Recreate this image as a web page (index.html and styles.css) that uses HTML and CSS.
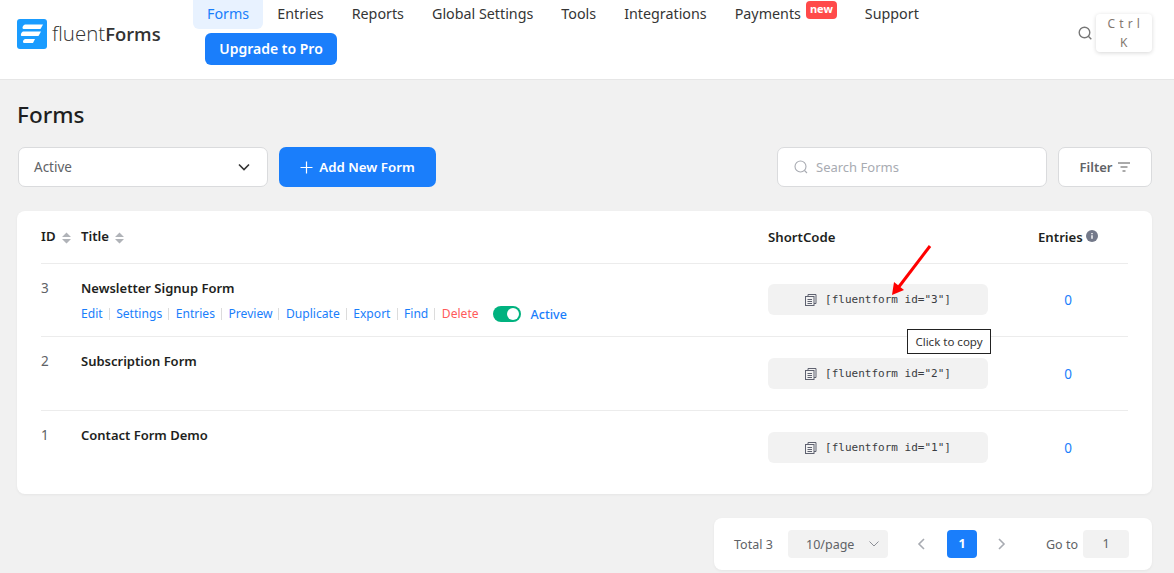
FILE: index.html
```html
<!DOCTYPE html>
<html lang="en">
<head>
  <meta charset="UTF-8">
  <meta name="viewport" content="width=device-width, initial-scale=1">
  <title>Fluent Forms</title>
  <link rel="stylesheet" href="styles.css">
</head>
<body>
  <!-- Top Bar -->
  <header class="top-bar">
    <div class="logo">
      <svg class="logo-mark" width="30" height="30" viewBox="0 0 30 30">
        <rect width="30" height="30" rx="3" fill="#1a9cff"/>
        <path d="M8 5.500h18l-2.500 4.500H6.500C5 10 5 7 8 5.500z" fill="#fff"/>
        <path d="M6 12.500h18l-2.500 4.500H4.500C3.500 17 3.500 14 6 12.500z" fill="#fff"/>
        <path d="M8 20h10l-2 4H7C5.500 24 5.500 21 8 20z" fill="#fff"/>
      </svg>
      <span class="logo-text">fluent<b>Forms</b></span>
    </div>
    <nav class="menu">
      <a class="menu-item current" href="#">Forms</a>
      <a class="menu-item" href="#">Entries</a>
      <a class="menu-item" href="#">Reports</a>
      <a class="menu-item" href="#">Global Settings</a>
      <a class="menu-item" href="#">Tools</a>
      <a class="menu-item" href="#">Integrations</a>
      <a class="menu-item" href="#">Payments<span class="new-badge">new</span></a>
      <a class="menu-item" href="#">Support</a>
      <a class="upgrade" href="#">Upgrade to Pro</a>
    </nav>
    <div class="global-search">
      <svg width="14" height="14" viewBox="0 0 14 14" fill="none" stroke="#777" stroke-width="1.400">
        <circle cx="6.500" cy="6.500" r="5.300"/>
        <path d="M10.300 10.300l3 3"/>
      </svg>
      <div class="shortcut">C t r l K</div>
    </div>
  </header>

  <!-- Main Content -->
  <main class="main">
    <h1 class="page-title">Forms</h1>

    <div class="toolbar">
      <div class="select">
        <span>Active</span>
        <svg width="14" height="14" viewBox="0 0 14 14" fill="none" stroke="#333" stroke-width="1.600">
          <path d="M2 4.500l5 5 5-5"/>
        </svg>
      </div>
      <a class="add-btn" href="#">
        <svg width="13" height="13" viewBox="0 0 13 13" stroke="#fff" stroke-width="1.200">
          <path d="M6.500 0.500v12M0.500 6.500h12"/>
        </svg>
        Add New Form
      </a>
      <div class="search">
        <svg width="14" height="14" viewBox="0 0 14 14" fill="none" stroke="#a8abb2" stroke-width="1.100">
          <circle cx="6.500" cy="6.500" r="5.500"/>
          <path d="M10.500 10.500l2.500 2.500"/>
        </svg>
        <span>Search Forms</span>
      </div>
      <a class="filter-btn" href="#">
        Filter
        <svg width="12" height="10" viewBox="0 0 12 10" stroke="#555" stroke-width="1">
          <path d="M0 1h12M2.500 5h7M4.500 9h3"/>
        </svg>
      </a>
    </div>

    <!-- Forms Table -->
    <section class="card">
      <div class="row head">
        <div class="sortable">ID
          <svg class="sort" width="9" height="12" viewBox="0 0 9 12" fill="#b0b3b8"><path d="M4.500 0.500L9 5H0zM4.500 11.500L0 7h9z"/></svg>
        </div>
        <div class="sortable">Title
          <svg class="sort" width="9" height="12" viewBox="0 0 9 12" fill="#b0b3b8"><path d="M4.500 0.500L9 5H0zM4.500 11.500L0 7h9z"/></svg>
        </div>
        <div class="head-label">ShortCode</div>
        <div class="head-label entries-head">Entries
          <svg width="12" height="12" viewBox="0 0 12 12"><circle cx="6" cy="6" r="6" fill="#73798a"/><path d="M6 5.200v3.600M6 3v1.200" stroke="#fff" stroke-width="1.400"/></svg>
        </div>
      </div>

      <div class="row first">
        <div class="cell-id">3</div>
        <div>
          <div class="form-name">Newsletter Signup Form</div>
          <div class="actions">
            <a href="#">Edit</a>
            <a href="#">Settings</a>
            <a href="#">Entries</a>
            <a href="#">Preview</a>
            <a href="#">Duplicate</a>
            <a href="#">Export</a>
            <a href="#">Find</a>
            <a class="delete" href="#">Delete</a>
            <span class="switch"></span>
            <span class="status">Active</span>
          </div>
        </div>
        <div class="code">
          <svg class="copy" width="12" height="12" viewBox="0 0 12 12" fill="none" stroke="#5f6270" stroke-width="1"><path d="M3 2.500V0.500h8v9H9"/><rect x="0.500" y="2.500" width="8.500" height="9"/><path d="M2.500 5.500h4.500M2.500 7.500h4.500M2.500 9.500h4.500"/></svg>
          [fluentform id="3"]
        </div>
        <a class="count" href="#">0</a>
      </div>

      <div class="row">
        <div class="cell-id">2</div>
        <div class="form-name">Subscription Form</div>
        <div class="code">
          <svg class="copy" width="12" height="12" viewBox="0 0 12 12" fill="none" stroke="#5f6270" stroke-width="1"><path d="M3 2.500V0.500h8v9H9"/><rect x="0.500" y="2.500" width="8.500" height="9"/><path d="M2.500 5.500h4.500M2.500 7.500h4.500M2.500 9.500h4.500"/></svg>
          [fluentform id="2"]
        </div>
        <a class="count" href="#">0</a>
      </div>

      <div class="row last">
        <div class="cell-id">1</div>
        <div class="form-name">Contact Form Demo</div>
        <div class="code">
          <svg class="copy" width="12" height="12" viewBox="0 0 12 12" fill="none" stroke="#5f6270" stroke-width="1"><path d="M3 2.500V0.500h8v9H9"/><rect x="0.500" y="2.500" width="8.500" height="9"/><path d="M2.500 5.500h4.500M2.500 7.500h4.500M2.500 9.500h4.500"/></svg>
          [fluentform id="1"]
        </div>
        <a class="count" href="#">0</a>
      </div>
    </section>

    <!-- Pagination -->
    <div class="pager-wrap">
      <div class="pager">
        <span class="total">Total 3</span>
        <div class="page-size">10/page
          <svg width="10" height="6" viewBox="0 0 10 6" fill="none" stroke="#8c8f96" stroke-width="1"><path d="M0.500 0.500L5 5l4.500-4.500"/></svg>
        </div>
        <svg class="arrow" width="8" height="12" viewBox="0 0 8 12" fill="none" stroke="#a8abb2" stroke-width="1.600"><path d="M7 1L2 6l5 5"/></svg>
        <span class="page-num">1</span>
        <svg class="arrow" width="8" height="12" viewBox="0 0 8 12" fill="none" stroke="#a8abb2" stroke-width="1.600"><path d="M1 1l5 5-5 5"/></svg>
        <span class="goto">Go to</span>
        <span class="goto-input">1</span>
      </div>
    </div>
  </main>

  <!-- Annotation over the table -->
  <div class="tooltip">Click to copy</div>
  <svg class="annotation" width="44" height="56" viewBox="0 0 44 56">
    <path d="M41 2L9 44" stroke="#f00" stroke-width="3"/>
    <path d="M3 51L5 38L15 46z" fill="#f00"/>
  </svg>
</body>
</html>
```

FILE: styles.css
```css
/* General Reset */
* {
  margin: 0;
  padding: 0;
  box-sizing: border-box;
}

body {
  font-family: "Noto Sans", "Open Sans", sans-serif;
  background-color: #f1f1f1;
  color: #1e1f21;
  font-size: 13.500px;
  height: 573px;
  overflow: hidden;
}

a {
  text-decoration: none;
  color: inherit;
}

/* Top Bar */
.top-bar {
  display: flex;
  align-items: flex-start;
  height: 80px;
  background-color: #fff;
  border-bottom: 1px solid #e6e6e6;
  padding: 0 22px 0 17px;
}

.logo {
  display: flex;
  align-items: center;
  gap: 5px;
  width: 176px;
  margin-top: 18px;
}

.logo-text {
  font-family: "Open Sans", sans-serif;
  font-size: 20.500px;
  font-weight: 300;
  color: #333;
  line-height: 30px;
}

.logo-text b {
  font-size: 18.400px;
  font-weight: 600;
}

.menu {
  display: flex;
  flex-wrap: wrap;
  width: 860px;
  row-gap: 4px;
}

.menu-item {
  display: flex;
  height: 29px;
  padding: 0 14px;
  line-height: 28px;
  font-size: 14.300px;
  color: #353535;
  border-radius: 0 0 6px 6px;
}

.menu-item.current {
  background-color: #e8f2ff;
  color: #1a7efb;
}

.new-badge {
  height: 18px;
  margin-top: 1px;
  margin-left: 5px;
  padding: 0 4px;
  line-height: 16px;
  font-size: 11px;
  font-weight: 700;
  color: #fff;
  background-color: #ff4a4a;
  border-radius: 4px;
}

.upgrade {
  height: 32px;
  width: 132px;
  margin-left: 12px;
  line-height: 32px;
  text-align: center;
  font-size: 14px;
  font-weight: 600;
  color: #fff;
  background-color: #1a7efb;
  border-radius: 6px;
}

.global-search {
  display: flex;
  align-items: center;
  gap: 4px;
  margin-left: auto;
  margin-top: 14px;
}

.shortcut {
  width: 56px;
  height: 38px;
  padding: 0 10px;
  text-align: center;
  font-size: 12px;
  letter-spacing: 0.500px;
  line-height: 19px;
  color: #83786f;
  background-color: #fff;
  border-radius: 4px;
  box-shadow: 0 1px 4px rgba(0, 0, 0, 0.16);
}

/* Main Layout */
.main {
  padding: 0 22px 0 17px;
}

.page-title {
  font-size: 22.500px;
  font-weight: 500;
  line-height: 32px;
  padding-top: 19px;
  height: 67px;
}

.toolbar {
  display: flex;
  align-items: center;
  height: 40px;
}

.select,
.search,
.filter-btn {
  display: flex;
  align-items: center;
  height: 40px;
  padding-bottom: 1px;
  background-color: #fff;
  border: 1px solid #dadbdd;
  border-radius: 7px;
}

.select {
  width: 250px;
  margin-left: 1px;
  padding-left: 15px;
  padding-right: 16px;
  justify-content: space-between;
  color: #606266;
}

.add-btn {
  display: flex;
  align-items: center;
  justify-content: center;
  gap: 6px;
  width: 157px;
  height: 40px;
  margin-left: 11px;
  font-size: 13.300px;
  font-weight: 600;
  color: #fff;
  background-color: #1a7efb;
  border-radius: 7px;
}

.search {
  width: 270px;
  margin-left: auto;
  padding-left: 16px;
  gap: 8px;
  font-size: 13px;
  color: #a8abb2;
}

.filter-btn {
  width: 94px;
  margin-left: 11px;
  justify-content: center;
  gap: 6px;
  font-size: 13px;
  font-weight: 600;
  color: #606266;
}

/* Forms Table */
.card {
  margin-top: 24px;
  padding: 0 24px 9px;
  background-color: #fff;
  border-radius: 8px;
  box-shadow: 0 1px 3px rgba(0, 0, 0, 0.05);
}

.row {
  display: grid;
  grid-template-columns: 40px 687px 270px 90px;
  height: 74px;
  padding-top: 13px;
  border-bottom: 1px solid #ececec;
}

.row.first {
  height: 73px;
}

.row.head {
  height: 53px;
  padding-top: 16px;
  font-size: 13.200px;
  font-weight: 600;
}

.row.last {
  border-bottom: none;
}

.head-label {
  padding-top: 1px;
}

.sortable {
  display: flex;
  align-items: flex-start;
  gap: 6px;
}

.sort {
  margin-top: 5px;
}

.entries-head {
  display: flex;
  align-items: flex-start;
  gap: 3px;
}

.entries-head svg {
  margin-top: 2px;
}

.cell-id {
  color: #606266;
  line-height: 22px;
}

.form-name {
  font-size: 13px;
  font-weight: 600;
  line-height: 22px;
}

.actions {
  display: flex;
  align-items: center;
  margin-top: 6px;
  font-size: 12.100px;
  color: #1a7efb;
}

.actions a {
  padding-right: 6px;
  margin-right: 6.500px;
  border-right: 1px solid #dcdcdc;
  line-height: 12px;
}

.actions a.delete {
  padding-right: 7px;
  margin-right: 7px;
  color: #ff5a5a;
  border-right: none;
}

.switch {
  position: relative;
  display: inline-block;
  width: 28px;
  height: 16px;
  margin-right: 10px;
  background-color: #00b27f;
  border-radius: 8px;
}

.switch::after {
  content: "";
  position: absolute;
  top: 2px;
  right: 2px;
  width: 12px;
  height: 12px;
  background-color: #fff;
  border-radius: 50%;
}

.status {
  margin-top: 1px;
  font-size: 12.500px;
  font-weight: 500;
  color: #1a7efb;
}

.code {
  display: flex;
  align-items: center;
  justify-content: center;
  gap: 8px;
  width: 220px;
  height: 31px;
  margin-top: 8px;
  font-family: "DejaVu Sans Mono", monospace;
  font-size: 11px;
  color: #3a3d42;
  background-color: #f2f2f2;
  border-radius: 6px;
}

.first .code {
  margin-top: 7px;
}

.count {
  width: 60px;
  margin-top: 8px;
  line-height: 33px;
  text-align: center;
  color: #1a7efb;
}

.first .count {
  margin-top: 7px;
}

/* Pagination */
.pager-wrap {
  display: flex;
  justify-content: flex-end;
  margin-top: 24px;
}

.pager {
  display: flex;
  align-items: center;
  width: 438px;
  height: 52px;
  padding: 0 23px 0 20px;
  font-size: 12.500px;
  color: #606266;
  background-color: #fff;
  border-radius: 8px;
  box-shadow: 0 1px 3px rgba(0, 0, 0, 0.05);
}

.total {
  width: 54px;
}

.page-size {
  display: flex;
  align-items: center;
  justify-content: space-between;
  width: 100px;
  height: 28px;
  padding: 0 9px 0 18px;
  background-color: #f2f2f2;
  border-radius: 4px;
}

.arrow {
  margin-left: 29px;
}

.page-num {
  width: 30px;
  height: 28px;
  margin-left: 22px;
  line-height: 28px;
  text-align: center;
  font-weight: 700;
  color: #fff;
  background-color: #1a7efb;
  border-radius: 4px;
}

.page-num + .arrow {
  margin-left: 21px;
}

.goto {
  margin-left: auto;
}

.goto-input {
  width: 46px;
  height: 28px;
  margin-left: 5px;
  line-height: 28px;
  text-align: center;
  background-color: #f2f2f2;
  border-radius: 4px;
}

/* Annotation */
.tooltip {
  position: absolute;
  left: 907px;
  top: 329px;
  width: 84px;
  height: 25px;
  line-height: 23px;
  text-align: center;
  font-size: 11.500px;
  color: #333;
  background-color: #fff;
  border: 1px solid #222;
}

.annotation {
  position: absolute;
  left: 889px;
  top: 244px;
}
```
